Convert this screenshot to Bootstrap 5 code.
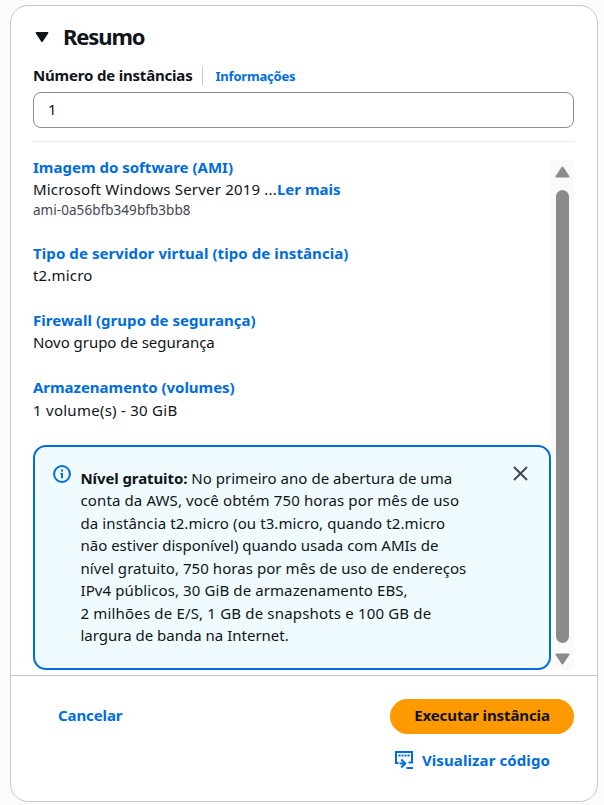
<!DOCTYPE html>
<html lang="pt-BR">
<head>
<meta charset="utf-8">
<meta name="viewport" content="width=device-width, initial-scale=1">
<title>Resumo</title>
<link href="https://cdn.jsdelivr.net/npm/bootstrap@5.3.0/dist/css/bootstrap.min.css" rel="stylesheet">
<style>
body{font-family:"Noto Sans","Open Sans",sans-serif;font-size:15px;line-height:22.5px;color:#0f141a;background:#fcfcfd;overflow:hidden}
a{color:#006ce0;font-weight:700;text-decoration:none}
svg{display:block;flex:none}
.summary{width:588px;height:797px;margin:5px 0 0 10px;border:1px solid #c6c6cd;border-radius:18px;overflow:hidden}
.summary-body{height:669px;padding:15px 23px 0 22px}
.title{font-size:22px;line-height:30px;letter-spacing:-1.1px}
.title-row{gap:13px;height:30px}
.toggle-icon{margin:2px 0 0 1px}
.label-row{margin-top:13px;height:23px;letter-spacing:-.19px}
.info-link{font-size:13px;letter-spacing:-.2px;margin-left:9px;padding-left:13px;border-left:1px solid #c6c6cd;line-height:18px}
.count{height:36px;margin-top:5px;padding:0 14px 2px;border:1px solid #8c8c94;border-radius:8px;font-size:15px;color:#0f141a}
.divider{height:1px;background:#ebebf0;margin-top:13px}
.details{width:518px;padding-top:13.7px}
.group{margin-bottom:22.4px}
.ami{font-size:13.5px;line-height:18.5px;color:#424650;letter-spacing:.05px}
.notice{height:225px;margin-top:23.6px;border:2px solid #006ce0;border-radius:13px;background:#f0fbff;padding:19.7px 21.5px 0 18px;color:#0f141a}
.notice-text{margin-left:9.5px;white-space:nowrap}
.notice-icon{margin-top:-1.7px}
.notice-close{margin-top:-.2px}
.track{width:23px;height:510px;margin-top:18px;background:#fafafa;padding:6px 0 5px}
.thumb{width:13px;height:453px;margin-top:1px;border-radius:7px;background:#8b8b8b}
.summary-foot{height:127px;border-top:1px solid #c6c6cd;padding:23px 23px 0 47px}
.launch{width:184px;height:35px;border-radius:18px;background:#ff9900;color:#0f141a;font-size:15px;letter-spacing:-.11px;line-height:22.5px;padding:0 0 2.5px;border:0}
.code-link{gap:9px;margin:15px 24px 0 0;letter-spacing:.1px}
.cancel{letter-spacing:-.1px;margin-top:5px}
.s-04{letter-spacing:.04px}.s-05{letter-spacing:.05px}.s-06{letter-spacing:.06px}.s-08{letter-spacing:.085px}.s-10{letter-spacing:.1px}.s-12{letter-spacing:.12px}.s-17{letter-spacing:.17px}.s-19{letter-spacing:.19px}.s-26{letter-spacing:.26px}
.n-03{letter-spacing:-.03px}.n-04{letter-spacing:-.04px}.n-10{letter-spacing:-.1px}
</style>
</head>
<body>
<main class="summary bg-white">
  <div class="summary-body">
    <div class="title-row d-flex align-items-center">
      <svg class="toggle-icon" width="16" height="16" viewBox="0 0 16 16"><path d="M2.4 3.8h11.2L8 12.2z" fill="#0f141a" stroke="#0f141a" stroke-width="1.6" stroke-linejoin="round"/></svg>
      <h1 class="title fw-bold m-0">Resumo</h1>
    </div>
    <div class="label-row d-flex align-items-center">
      <label class="fw-bold" for="count">Número de instâncias</label>
      <a class="info-link" href="#">Informações</a>
    </div>
    <input id="count" class="count form-control shadow-none" value="1">
    <div class="divider"></div>
    <div class="d-flex">
      <div class="details">
        <div class="group">
          <div><a href="#">Imagem do software (AMI)</a></div>
          <div class="text-nowrap"><span class="s-19">Microsoft Windows Server 2019 ...</span><a href="#">Ler mais</a></div>
          <div class="ami">ami-0a56bfb349bfb3bb8</div>
        </div>
        <div class="group">
          <div><a class="s-08" href="#">Tipo de servidor virtual (tipo de instância)</a></div>
          <div class="s-17">t2.micro</div>
        </div>
        <div class="group">
          <div><a class="s-05" href="#">Firewall (grupo de segurança)</a></div>
          <div class="n-04">Novo grupo de segurança</div>
        </div>
        <div>
          <div><a class="n-03" href="#">Armazenamento (volumes)</a></div>
          <div class="s-26">1 volume(s) - 30 GiB</div>
        </div>
        <div class="notice d-flex align-items-start">
          <svg class="notice-icon" width="18" height="18" viewBox="0 0 18 18" fill="none" stroke="#006ce0" stroke-width="2"><circle cx="9" cy="9" r="7.9"/><path d="M9 4.5v2M9 8v5.2"/><path d="M7.2 8.4H9" stroke-width="1"/></svg>
          <div class="notice-text flex-grow-1">
            <b class="n-10">Nível gratuito:</b> <span class="s-04">No primeiro ano de abertura de uma</span><br>
            <span class="s-12">conta da AWS, você obtém 750 horas por mês de uso</span><br>
            <span class="s-10">da instância t2.micro (ou t3.micro, quando t2.micro</span><br>
            <span>não estiver disponível) quando usada com AMIs de</span><br>
            <span class="s-06">nível gratuito, 750 horas por mês de uso de endereços</span><br>
            <span class="s-10">IPv4 públicos, 30 GiB de armazenamento EBS,</span><br>
            <span class="s-17">2 milhões de E/S, 1 GB de snapshots e 100 GB de</span><br>
            <span>largura de banda na Internet.</span>
          </div>
          <svg class="notice-close" width="15" height="15" viewBox="0 0 15 15"><path d="M1 1l13 13M14 1L1 14" stroke="#424650" stroke-width="2"/></svg>
        </div>
      </div>
      <div class="track d-flex flex-column align-items-center justify-content-between">
        <svg width="15" height="12" viewBox="0 0 15 12"><path d="M7.5 1.5L13.5 10.5h-12z" fill="#8b8b8b" stroke="#8b8b8b" stroke-width="2" stroke-linejoin="round"/></svg>
        <div class="thumb"></div>
        <svg width="15" height="12" viewBox="0 0 15 12"><path d="M7.5 10.5L13.5 1.5h-12z" fill="#8b8b8b" stroke="#8b8b8b" stroke-width="2" stroke-linejoin="round"/></svg>
      </div>
    </div>
  </div>
  <div class="summary-foot d-flex justify-content-between align-items-start">
    <a class="cancel" href="#">Cancelar</a>
    <div class="d-flex flex-column align-items-end">
      <button class="launch btn fw-bold" type="button">Executar instância</button>
      <a class="code-link d-flex align-items-center" href="#">
        <svg width="18" height="18" viewBox="0 0 18 18" fill="none" stroke="#006ce0" stroke-width="2"><path d="M3.5 12H1V1h16v10.5h-3.5M11.5 17H18M4.5 12.5H10M6.2 8.5l4 4-4 4"/><path d="M3.5 4.5h11" stroke-dasharray="2 1"/></svg>
        <span>Visualizar código</span>
      </a>
    </div>
  </div>
</main>
<script src="https://cdn.jsdelivr.net/npm/bootstrap@5.3.0/dist/js/bootstrap.bundle.min.js"></script>
</body>
</html>
